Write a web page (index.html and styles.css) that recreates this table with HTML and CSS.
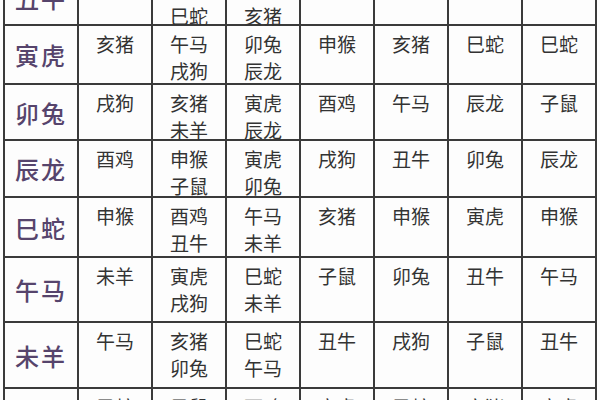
FILE: index.html
```html
<!DOCTYPE html>
<html lang="zh-CN">
<head>
<meta charset="utf-8">
<title>生肖合冲刑害表</title>
<link rel="stylesheet" href="styles.css">
</head>
<body>
<div class="chart">
  <div class="label">丑牛</div>
  <div class="cell">子鼠</div>
  <div class="cell">酉鸡<br>巳蛇</div>
  <div class="cell">子鼠<br>亥猪</div>
  <div class="cell">未羊</div>
  <div class="cell">辰龙</div>
  <div class="cell">午马</div>
  <div class="cell">戌狗</div>

  <div class="label">寅虎</div>
  <div class="cell">亥猪</div>
  <div class="cell">午马<br>戌狗</div>
  <div class="cell">卯兔<br>辰龙</div>
  <div class="cell">申猴</div>
  <div class="cell">亥猪</div>
  <div class="cell">巳蛇</div>
  <div class="cell">巳蛇</div>

  <div class="label">卯兔</div>
  <div class="cell">戌狗</div>
  <div class="cell">亥猪<br>未羊</div>
  <div class="cell">寅虎<br>辰龙</div>
  <div class="cell">酉鸡</div>
  <div class="cell">午马</div>
  <div class="cell">辰龙</div>
  <div class="cell">子鼠</div>

  <div class="label">辰龙</div>
  <div class="cell">酉鸡</div>
  <div class="cell">申猴<br>子鼠</div>
  <div class="cell">寅虎<br>卯兔</div>
  <div class="cell">戌狗</div>
  <div class="cell">丑牛</div>
  <div class="cell">卯兔</div>
  <div class="cell">辰龙</div>

  <div class="label">巳蛇</div>
  <div class="cell">申猴</div>
  <div class="cell">酉鸡<br>丑牛</div>
  <div class="cell">午马<br>未羊</div>
  <div class="cell">亥猪</div>
  <div class="cell">申猴</div>
  <div class="cell">寅虎</div>
  <div class="cell">申猴</div>

  <div class="label">午马</div>
  <div class="cell">未羊</div>
  <div class="cell">寅虎<br>戌狗</div>
  <div class="cell">巳蛇<br>未羊</div>
  <div class="cell">子鼠</div>
  <div class="cell">卯兔</div>
  <div class="cell">丑牛</div>
  <div class="cell">午马</div>

  <div class="label">未羊</div>
  <div class="cell">午马</div>
  <div class="cell">亥猪<br>卯兔</div>
  <div class="cell">巳蛇<br>午马</div>
  <div class="cell">丑牛</div>
  <div class="cell">戌狗</div>
  <div class="cell">子鼠</div>
  <div class="cell">丑牛</div>

  <div class="label">申猴</div>
  <div class="cell">巳蛇</div>
  <div class="cell">子鼠<br>辰龙</div>
  <div class="cell">酉鸡<br>戌狗</div>
  <div class="cell">寅虎</div>
  <div class="cell">巳蛇</div>
  <div class="cell">亥猪</div>
  <div class="cell">寅虎</div>
</div>
</body>
</html>
```

FILE: styles.css
```css
html, body {
  margin: 0;
  padding: 0;
  background: #fdfdfd;
  overflow: hidden;
}

body {
  width: 600px;
  height: 400px;
  font-family: "Noto Sans CJK SC", "Noto Sans", sans-serif;
}

.chart {
  display: grid;
  grid-template-columns: repeat(8, 72px);
  grid-template-rows: 53px 57px 54px 55px 58px 63px 64px 60px;
  gap: 2px;
  padding: 2px;
  background: #3a3a3a;
  width: max-content;
  margin: -31px 0 0 3px;
}

.label,
.cell {
  background: #fdfdfd;
}

.label {
  display: flex;
  align-items: center;
  justify-content: center;
  font-size: 24px;
  font-weight: 500;
  color: #56446c;
  letter-spacing: 2px;
}

.cell {
  padding-top: 4px;
  text-align: center;
  font-size: 19px;
  line-height: 27px;
  color: #333333;
}
```
